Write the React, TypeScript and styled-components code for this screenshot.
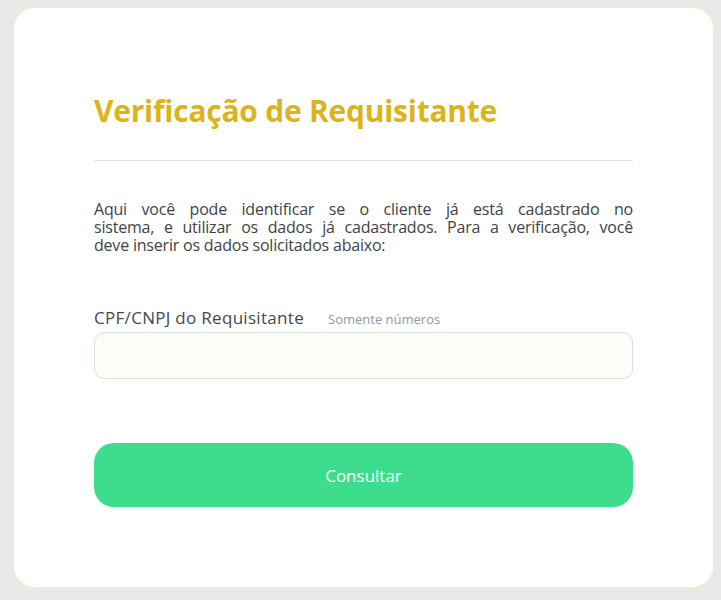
import React from "react";
import styled, { createGlobalStyle } from "styled-components";

const Global = createGlobalStyle`
  html, body { margin: 0; padding: 0; background: #e9e9e9; }
  body { font-family: "Open Sans", "Noto Sans", sans-serif; }
  * { box-sizing: border-box; }
`;

const Page = styled.div`
  padding: 7px 8px 13px 13px;
  min-height: 600px;
`;

const Card = styled.div`
  width: 701px;
  height: 581px;
  background: #ffffff;
  border: 1px solid #f8f0b8;
  border-radius: 22px;
  padding: 83px 80px 0 80px;
  display: flex;
  flex-direction: column;
`;

const Title = styled.h1`
  margin: 0;
  font-family: "Open Sans", "Noto Sans", sans-serif;
  font-weight: 700;
  font-size: 30px;
  letter-spacing: -0.25px;
  line-height: 40px;
  color: #dbb41b;
`;

const Divider = styled.hr`
  margin: 29px 0 0 0;
  border: 0;
  border-top: 1px solid #d8e6ec;
`;

const Intro = styled.p`
  margin: 39px 0 0 0;
  font-size: 16px;
  letter-spacing: -0.2px;
  line-height: 18px;
  color: #3f4346;
  text-align: justify;
`;

const Line = styled.span<{ $fill?: boolean }>`
  display: block;
  text-align-last: ${(p) => (p.$fill ? "justify" : "left")};
`;

const LabelRow = styled.div`
  display: flex;
  align-items: baseline;
  gap: 24px;
  margin-top: 52px;
`;

const Label = styled.label`
  font-size: 17px;
  letter-spacing: 0.3px;
  color: #45494c;
`;

const Hint = styled.span`
  font-size: 13px;
  color: #8e9aa6;
`;

const Input = styled.input`
  margin-top: 3px;
  height: 47px;
  width: 100%;
  border: 1px solid #d3e0e6;
  border-radius: 10px;
  background: #fdfdf8;
  outline: none;
  padding: 0 14px;
  font-size: 16px;
`;

const Button = styled.button`
  margin-top: 64px;
  height: 64px;
  width: 100%;
  border: 0;
  border-radius: 20px;
  background: #3ddd8d;
  color: #ffffff;
  font-family: "Open Sans", "Noto Sans", sans-serif;
  font-size: 17px;
  cursor: pointer;
`;

export default function App() {
  return (
    <>
      <Global />
      <Page>
        <Card>
          <Title>Verificação de Requisitante</Title>
          <Divider />
          <Intro>
            <Line $fill>Aqui você pode identificar se o cliente já está cadastrado no</Line>
            <Line $fill>sistema, e utilizar os dados já cadastrados. Para a verificação, você</Line>
            <Line>deve inserir os dados solicitados abaixo:</Line>
          </Intro>
          <LabelRow>
            <Label>CPF/CNPJ do Requisitante</Label>
            <Hint>Somente números</Hint>
          </LabelRow>
          <Input />
          <Button>Consultar</Button>
        </Card>
      </Page>
    </>
  );
}
